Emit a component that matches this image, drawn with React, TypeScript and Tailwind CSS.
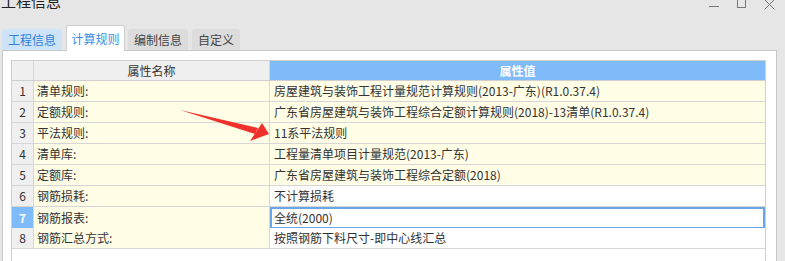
import React from "react";

type Row = { name: string; value: string; yellow: boolean };

const ROWS: Row[] = [
  { name: "清单规则:", value: "房屋建筑与装饰工程计量规范计算规则(2013-广东)(R1.0.37.4)", yellow: true },
  { name: "定额规则:", value: "广东省房屋建筑与装饰工程综合定额计算规则(2018)-13清单(R1.0.37.4)", yellow: true },
  { name: "平法规则:", value: "11系平法规则", yellow: true },
  { name: "清单库:", value: "工程量清单项目计量规范(2013-广东)", yellow: true },
  { name: "定额库:", value: "广东省房屋建筑与装饰工程综合定额(2018)", yellow: true },
  { name: "钢筋损耗:", value: "不计算损耗", yellow: false },
  { name: "钢筋报表:", value: "全统(2000)", yellow: false },
  { name: "钢筋汇总方式:", value: "按照钢筋下料尺寸-即中心线汇总", yellow: false },
];

const FONT = "font-['Microsoft_YaHei','Noto_Sans_CJK_SC',sans-serif]";

export default function App() {
  return (
    <div className={`relative w-[785px] h-[261px] overflow-hidden bg-[#e6e6e6] ${FONT} text-[#333]`}>
      {/* title bar */}
      <div className="flex h-[25px] items-start justify-between">
        <div className="-mt-[9px] pl-[1px] text-[15px] leading-[20px] text-[#222]">工程信息</div>
        <div className="flex items-start gap-[18px] pr-[10px]">
          <div className="mt-[6px] h-px w-[10px] bg-[#777]" />
          <div className="-mt-[2px] h-[10px] w-[9px] border border-[#777]" />
          <svg width="11" height="11" viewBox="0 0 11 11" className="-mt-[1px]">
            <path d="M0.5 0.5 L10.5 10.5 M10.5 0.5 L0.5 10.5" stroke="#777" strokeWidth="1" />
          </svg>
        </div>
      </div>

      {/* tabs */}
      <div className="flex h-[25px] items-end pl-[2px] text-[12px]">
        <div className="flex h-[21px] w-[60px] items-center justify-center rounded-t-[3px] bg-[#cde3f8] text-[#2f7fd6]">
          工程信息
        </div>
        <div className="relative z-10 -mb-px ml-[4px] flex h-[26px] w-[59px] items-center justify-center rounded-t-[3px] border border-b-0 border-[#cfcfcf] bg-white text-[#3b8be0]">
          计算规则
        </div>
        <div className="ml-[3px] flex h-[21px] w-[60px] items-center justify-center rounded-t-[3px] bg-[#dcdcdc] text-[#444]">
          编制信息
        </div>
        <div className="ml-[4px] flex h-[21px] w-[48px] items-center justify-center rounded-t-[3px] bg-[#dcdcdc] text-[#444]">
          自定义
        </div>
      </div>

      {/* panel */}
      <div className="ml-[2px] flex h-[211px] w-[775px] flex-col border border-b-0 border-[#c8c8c8] bg-white pl-[8px] pr-[10px] pt-[9px]">
        <div className="flex-1 border border-b-0 border-[#cfcfcf] text-[12px]">
          <div className="grid grid-cols-[22px_236px_1fr] h-[20px] border-b border-[#cfcfcf]">
            <div className="border-r border-[#d6d6d6] bg-[#efefef]" />
            <div className="flex items-center justify-center border-r border-[#d6d6d6] bg-[#efefef] text-[#333]">
              属性名称
            </div>
            <div className="flex items-center justify-center bg-[#80bbf9] font-bold text-white">
              属性值
            </div>
          </div>
          {ROWS.map((r, i) => {
            const selected = i === 6;
            return (
              <div key={i} className="grid grid-cols-[22px_236px_1fr] h-[21px] border-b border-[#d6d6d6]">
                <div
                  className={
                    selected
                      ? "flex items-center justify-center border-r border-[#d6d6d6] bg-[#80bbf9] font-bold text-white"
                      : "flex items-center justify-center border-r border-[#d6d6d6] bg-[#efefef] text-[#333]"
                  }
                >
                  {i + 1}
                </div>
                <div className="flex items-center border-r border-[#d6d6d6] bg-[#fffde6] pl-[3px]">
                  {r.name}
                </div>
                <div
                  className={
                    selected
                      ? "flex items-center border-2 border-[#6aa6e6] bg-white pl-[2px]"
                      : r.yellow
                        ? "flex items-center bg-[#fffde6] pl-[4px]"
                        : "flex items-center bg-white pl-[4px]"
                  }
                >
                  {r.value}
                </div>
              </div>
            );
          })}
        </div>
      </div>

      {/* red annotation arrow */}
      <svg className="pointer-events-none absolute left-0 top-0" width="785" height="261">
        <path d="M180 110 L258 128 L255 134 Z" fill="#f0302a" />
        <path d="M269 134 L250 141 L262 123 Z" fill="#f0302a" />
      </svg>
    </div>
  );
}
